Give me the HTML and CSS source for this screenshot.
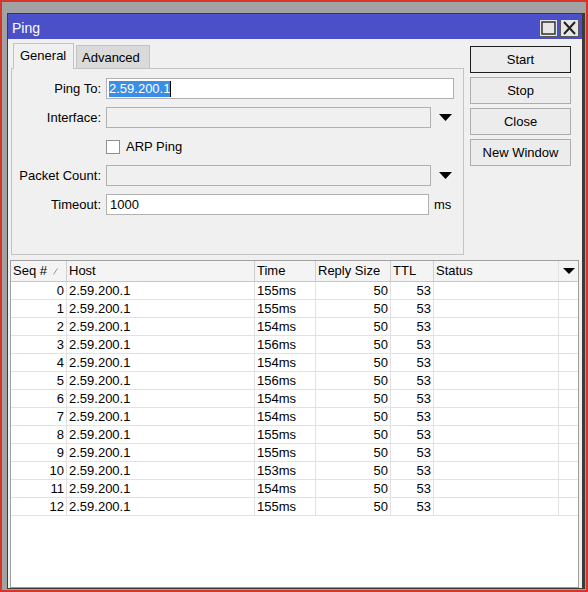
FILE: index.html
```html
<!DOCTYPE html>
<html>
<head>
<meta charset="utf-8">
<link rel="stylesheet" href="styles.css">
</head>
<body>
<div class="screen">
  <div class="window">
    <div class="titlebar">
      <span class="title">Ping</span>
      <div class="tb-buttons">
        <span class="tb-btn"><svg width="15" height="14" viewBox="0 0 15 14"><rect x="1" y="1" width="13" height="12" fill="none" stroke="#333" stroke-width="1.5"/></svg></span>
        <span class="tb-btn"><svg width="15" height="14" viewBox="0 0 15 14"><path d="M2 1 L13 13 M13 1 L2 13" stroke="#222" stroke-width="2" fill="none"/></svg></span>
      </div>
    </div>
    <div class="wbody">
      <div class="top">
        <div class="left">
          <div class="tabs">
            <div class="tab active">General</div>
            <div class="tab">Advanced</div>
          </div>
          <div class="panel">
            <div class="frow">
              <span class="lbl">Ping To:</span>
              <div class="field wide white"><span class="sel">2.59.200.1</span><span class="caret"></span></div>
            </div>
            <div class="frow">
              <span class="lbl">Interface:</span>
              <div class="field combo"></div>
              <svg class="arrow" width="13" height="7" viewBox="0 0 13 7"><path d="M0 0 H13 L6.5 7 Z" fill="#000"/></svg>
            </div>
            <div class="frow">
              <span class="lbl"></span>
              <span class="check"></span>
              <span class="checklbl">ARP Ping</span>
            </div>
            <div class="frow">
              <span class="lbl">Packet Count:</span>
              <div class="field combo"></div>
              <svg class="arrow" width="13" height="7" viewBox="0 0 13 7"><path d="M0 0 H13 L6.5 7 Z" fill="#000"/></svg>
            </div>
            <div class="frow">
              <span class="lbl">Timeout:</span>
              <div class="field timeout white"><span class="val">1000</span></div>
              <span class="unit">ms</span>
            </div>
          </div>
        </div>
        <div class="buttons">
          <div class="btn default">Start</div>
          <div class="btn">Stop</div>
          <div class="btn">Close</div>
          <div class="btn">New Window</div>
        </div>
      </div>
      <div class="table">
        <div class="trow head">
          <div class="c">Seq #<svg class="sort" width="5" height="7" viewBox="0 0 5 7"><path d="M0.5 6.5 L4.5 0.5" stroke="#9a9a9a" stroke-width="1"/></svg></div>
          <div class="c">Host</div>
          <div class="c">Time</div>
          <div class="c">Reply Size</div>
          <div class="c">TTL</div>
          <div class="c">Status</div>
          <div class="c dd"><svg width="12" height="6" viewBox="0 0 12 6"><path d="M0 0 H12 L6 6 Z" fill="#000"/></svg></div>
        </div>
        <div class="trow"><div class="c r">0</div><div class="c">2.59.200.1</div><div class="c">155ms</div><div class="c r">50</div><div class="c r">53</div><div class="c"></div><div class="c"></div></div>
        <div class="trow"><div class="c r">1</div><div class="c">2.59.200.1</div><div class="c">155ms</div><div class="c r">50</div><div class="c r">53</div><div class="c"></div><div class="c"></div></div>
        <div class="trow"><div class="c r">2</div><div class="c">2.59.200.1</div><div class="c">154ms</div><div class="c r">50</div><div class="c r">53</div><div class="c"></div><div class="c"></div></div>
        <div class="trow"><div class="c r">3</div><div class="c">2.59.200.1</div><div class="c">156ms</div><div class="c r">50</div><div class="c r">53</div><div class="c"></div><div class="c"></div></div>
        <div class="trow"><div class="c r">4</div><div class="c">2.59.200.1</div><div class="c">154ms</div><div class="c r">50</div><div class="c r">53</div><div class="c"></div><div class="c"></div></div>
        <div class="trow"><div class="c r">5</div><div class="c">2.59.200.1</div><div class="c">156ms</div><div class="c r">50</div><div class="c r">53</div><div class="c"></div><div class="c"></div></div>
        <div class="trow"><div class="c r">6</div><div class="c">2.59.200.1</div><div class="c">154ms</div><div class="c r">50</div><div class="c r">53</div><div class="c"></div><div class="c"></div></div>
        <div class="trow"><div class="c r">7</div><div class="c">2.59.200.1</div><div class="c">154ms</div><div class="c r">50</div><div class="c r">53</div><div class="c"></div><div class="c"></div></div>
        <div class="trow"><div class="c r">8</div><div class="c">2.59.200.1</div><div class="c">155ms</div><div class="c r">50</div><div class="c r">53</div><div class="c"></div><div class="c"></div></div>
        <div class="trow"><div class="c r">9</div><div class="c">2.59.200.1</div><div class="c">155ms</div><div class="c r">50</div><div class="c r">53</div><div class="c"></div><div class="c"></div></div>
        <div class="trow"><div class="c r">10</div><div class="c">2.59.200.1</div><div class="c">153ms</div><div class="c r">50</div><div class="c r">53</div><div class="c"></div><div class="c"></div></div>
        <div class="trow"><div class="c r">11</div><div class="c">2.59.200.1</div><div class="c">154ms</div><div class="c r">50</div><div class="c r">53</div><div class="c"></div><div class="c"></div></div>
        <div class="trow"><div class="c r">12</div><div class="c">2.59.200.1</div><div class="c">155ms</div><div class="c r">50</div><div class="c r">53</div><div class="c"></div><div class="c"></div></div>
      </div>
    </div>
  </div>
</div>
</body>
</html>
```
FILE: styles.css
```css
* { box-sizing: border-box; }
html, body { margin: 0; padding: 0; }
body {
  font-family: "Liberation Sans", Arial, sans-serif;
  font-size: 13px;
  color: #000;
  background: #a2a2a2;
}
.screen {
  width: 588px;
  height: 592px;
  border: 2px solid #d7342c;
  background: #a2a2a2;
  padding: 11px 1px 1px 5px;
  display: flex;
}
.window {
  flex: 1;
  display: flex;
  flex-direction: column;
  border: 1px solid #3b3b3b;
  border-right-width: 3px;
  background: #f0f0f0;
}
.titlebar {
  height: 25px;
  background: #4b4fc8;
  display: flex;
  justify-content: space-between;
  align-items: flex-start;
  flex-shrink: 0;
}
.title {
  color: #fff;
  font-size: 14px;
  line-height: 25px;
  padding: 2px 0 0 4px;
}
.tb-buttons {
  display: flex;
  gap: 2px;
  padding: 5px 3px 0 0;
}
.tb-btn {
  width: 19px;
  height: 18px;
  background: #e6e6e6;
  border: 1px solid #5a5a5a;
  display: flex;
  align-items: center;
  justify-content: center;
}
.wbody {
  flex: 1;
  display: flex;
  flex-direction: column;
  padding: 4px 3px 0 2px;
}
.top {
  display: flex;
  align-items: flex-start;
}
.left {
  margin-left: 1px;
  width: 453px;
  display: flex;
  flex-direction: column;
}
.tabs {
  display: flex;
  align-items: flex-end;
  gap: 2px;
  padding-left: 2px;
  height: 26px;
  margin-bottom: -1px;
  position: relative;
  z-index: 1;
}
.tab {
  height: 24px;
  width: 74px;
  background: #dadada;
  border: 1px solid #c4c4c4;
  padding: 4px 0 0 5px;
}
.tab.active {
  height: 26px;
  width: 61px;
  background: #f0f0f0;
  border-bottom: none;
  padding: 4px 0 0 6px;
}
.panel {
  height: 187px;
  border: 1px solid #c4c4c4;
  padding-top: 9px;
  display: flex;
  flex-direction: column;
  gap: 8px;
}
.frow {
  display: flex;
  align-items: center;
  height: 21px;
}
.lbl {
  width: 89px;
  text-align: right;
  margin-right: 5px;
  white-space: nowrap;
}
.field {
  height: 21px;
  border: 1px solid #b1b1b1;
  display: flex;
  align-items: center;
  padding-left: 2px;
}
.field.white { background: #fff; }
.field.wide { width: 348px; }
.field.combo { width: 325px; background: #f0f0f0; }
.field.timeout { width: 323px; }
.sel {
  background: #3a8ee6;
  color: #fff;
  line-height: 16px;
}
.caret {
  width: 1px;
  height: 16px;
  background: #000;
}
.val { padding-left: 1px; }
.arrow { margin-left: 8px; }
.check {
  width: 14px;
  height: 14px;
  background: #fff;
  border: 1px solid #8f8f8f;
}
.checklbl { margin-left: 6px; }
.unit { margin-left: 5px; }
.buttons {
  margin-left: 6px;
  margin-top: 3px;
  width: 101px;
  display: flex;
  flex-direction: column;
  gap: 4px;
}
.btn {
  height: 27px;
  border: 1px solid #adadad;
  background: #ececec;
  display: flex;
  align-items: center;
  justify-content: center;
  white-space: nowrap;
}
.btn.default { border-color: #1e1e1e; }
.table {
  margin-top: 5px;
  flex: 1;
  border: 1px solid #a0a0a0;
  border-bottom-color: #8fa08f;
  background: #fff;
  overflow: hidden;
}
.trow {
  display: grid;
  grid-template-columns: 56px 188px 61px 75px 43px 125px 1fr;
  height: 18px;
  border-bottom: 1px solid #e2e2e2;
}
.trow.head {
  height: 21px;
  background: #f4f4f4;
  border-bottom: 1px solid #c6c6c6;
}
.c {
  border-right: 1px solid #e2e2e2;
  padding: 0 2px;
  line-height: 17px;
  white-space: nowrap;
  overflow: hidden;
}
.c:last-child { border-right: none; }
.head .c {
  border-right-color: #cfcfcf;
  line-height: 20px;
  display: flex;
  align-items: center;
}
.head .c:nth-child(6) { border-right-color: #e2e2e2; }
.c.r { text-align: right; }
.sort { margin-left: 6px; }
.c.dd { justify-content: center; padding: 0 0 0 1px; }
```
